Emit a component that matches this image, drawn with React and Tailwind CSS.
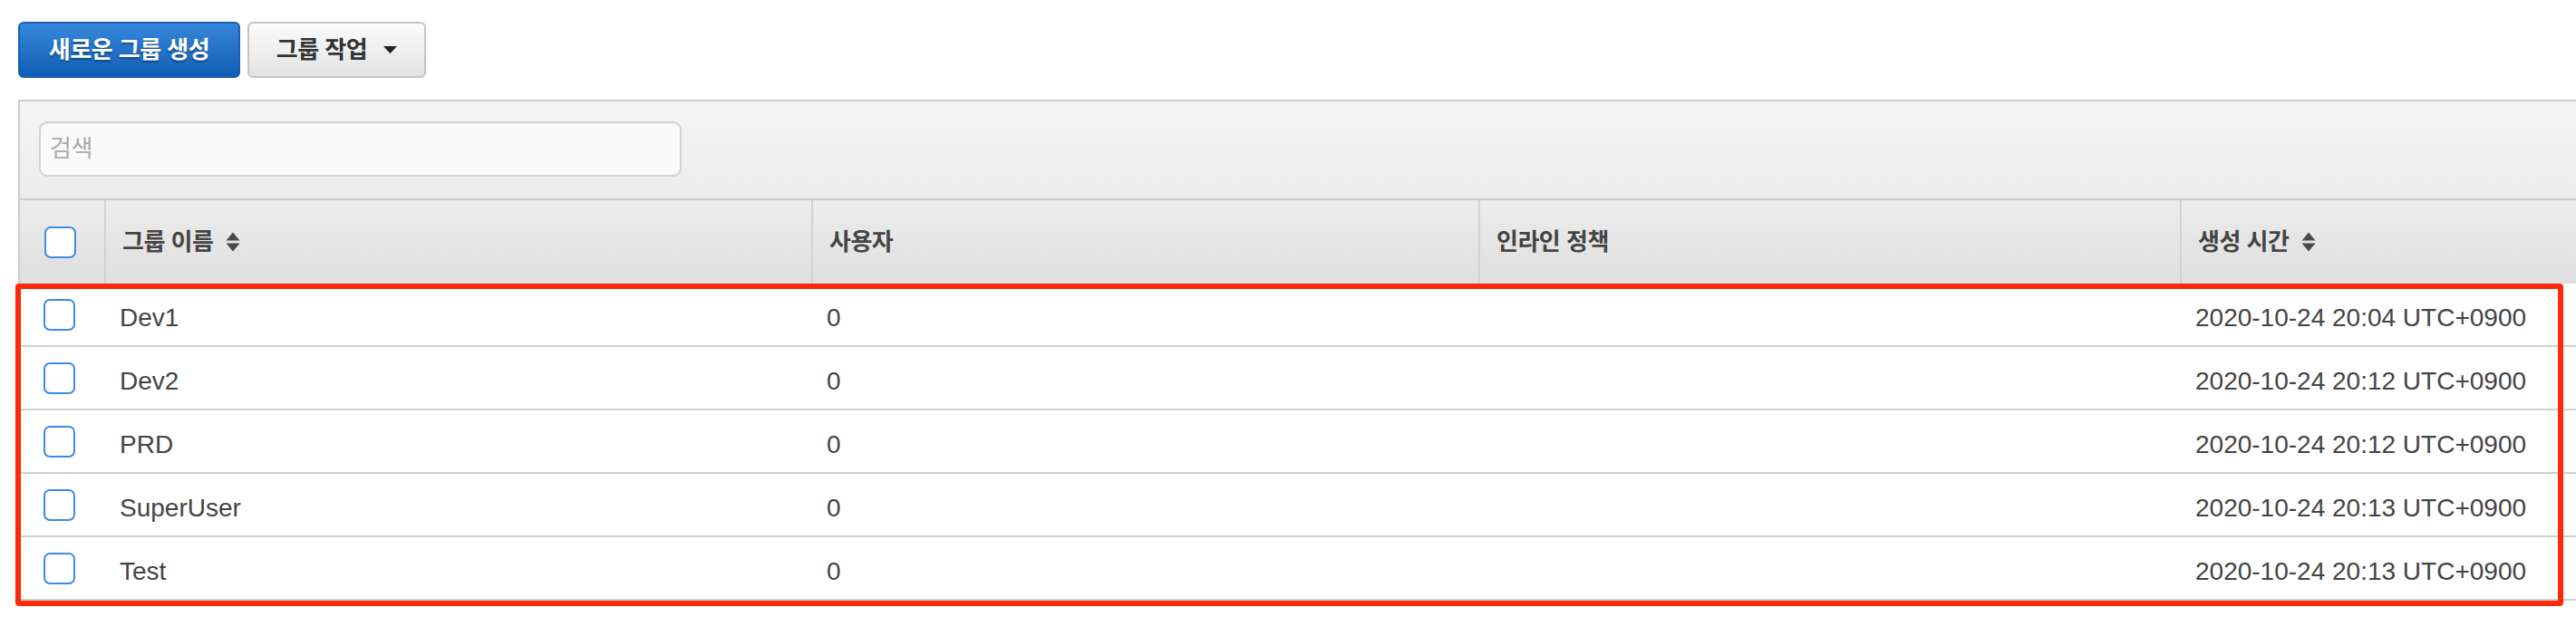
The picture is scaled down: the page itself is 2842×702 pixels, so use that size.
import React from "react";

const rows = [
  { name: "Dev1", users: "0", created: "2020-10-24 20:04 UTC+0900" },
  { name: "Dev2", users: "0", created: "2020-10-24 20:12 UTC+0900" },
  { name: "PRD", users: "0", created: "2020-10-24 20:12 UTC+0900" },
  { name: "SuperUser", users: "0", created: "2020-10-24 20:13 UTC+0900" },
  { name: "Test", users: "0", created: "2020-10-24 20:13 UTC+0900" },
];

const gridCols = "grid grid-cols-[93px_780px_736px_774px_1fr]";

function SortIcon() {
  return (
    <svg width="16" height="24" viewBox="0 0 16 24" className="ml-[14px] shrink-0">
      <polygon points="0.5,10.5 8,1.5 15.5,10.5" fill="#4a4a4a" />
      <polygon points="0.5,13.5 15.5,13.5 8,22.5" fill="#4a4a4a" />
    </svg>
  );
}

function Checkbox() {
  return <div className="w-[35px] h-[35px] rounded-[7px] border-2 border-[#3d8ce0] bg-white" />;
}

function HeaderCell({ label, sortable }) {
  return (
    <div className="flex items-center h-full border-l-2 border-[#d2d2d2] pl-[18px] text-[26px] tracking-[-0.5px] font-bold text-[#444]">
      <span>{label}</span>
      {sortable && <SortIcon />}
    </div>
  );
}

export default function App() {
  return (
    <div className="relative w-[2842px] h-[702px] overflow-hidden bg-white font-['Liberation_Sans','Noto_Sans_CJK_KR',sans-serif]">
      {/* top actions */}
      <div className="flex gap-[8px] pt-[24px] pl-[20px]">
        <button className="w-[245px] h-[62px] rounded-[6px] border-2 border-[#1b5fae] bg-gradient-to-b from-[#3688dc] to-[#0f5db5] text-white text-[26px] tracking-[-0.5px] font-bold [text-shadow:0_2px_2px_rgba(0,0,0,0.35)]">
          새로운 그룹 생성
        </button>
        <button className="flex items-center justify-center gap-[18px] w-[197px] h-[62px] rounded-[6px] border-2 border-[#c4c4c4] bg-gradient-to-b from-[#fbfbfb] to-[#e3e3e3] text-[#333] text-[26px] tracking-[-0.5px] font-bold">
          <span>그룹 작업</span>
          <svg width="15" height="8" viewBox="0 0 15 8">
            <polygon points="0,0 15,0 7.5,8" fill="#222" />
          </svg>
        </button>
      </div>

      {/* panel */}
      <div className="mt-[24px] ml-[20px] border-l-2 border-t-2 border-[#cccccc]">
        <div className="h-[107px] pt-[22px] pl-[21px] bg-gradient-to-b from-[#f5f5f5] to-[#ececec]">
          <input
            placeholder="검색"
            className="w-[709px] h-[61px] rounded-[9px] border-2 border-[#d3d3d3] bg-[#fafafa] pl-[10px] text-[26px] tracking-[-0.5px] outline-none shadow-[inset_0_1px_2px_rgba(0,0,0,0.06)] placeholder:text-[#ababab]"
          />
        </div>

        <div className={`${gridCols} h-[94px] border-t-2 border-[#cccccc] bg-gradient-to-b from-[#ececec] to-[#dfdfdf]`}>
          <div className="flex items-center pl-[27px]">
            <Checkbox />
          </div>
          <HeaderCell label="그룹 이름" sortable />
          <HeaderCell label="사용자" />
          <HeaderCell label="인라인 정책" />
          <HeaderCell label="생성 시간" sortable />
        </div>

        {rows.map((row) => (
          <div key={row.name} className={`${gridCols} h-[70px] border-b-2 border-[#d0d0d0] bg-white text-[28px] text-[#444]`}>
            <div className="flex items-center pl-[26px]">
              <Checkbox />
            </div>
            <div className="flex items-center border-l-2 border-transparent pl-[15px] pt-[8px]">{row.name}</div>
            <div className="flex items-center border-l-2 border-transparent pl-[15px] pt-[8px]">{row.users}</div>
            <div className="flex items-center border-l-2 border-transparent pl-[15px] pt-[8px]"></div>
            <div className="flex items-center border-l-2 border-transparent pl-[15px] pt-[8px] whitespace-nowrap">{row.created}</div>
          </div>
        ))}
      </div>

      {/* red highlight box */}
      <div className="absolute left-[17px] top-[313px] w-[2811px] h-[356px] rounded-[4px] border-[6px] border-[#fb2a0a] pointer-events-none" />
    </div>
  );
}
